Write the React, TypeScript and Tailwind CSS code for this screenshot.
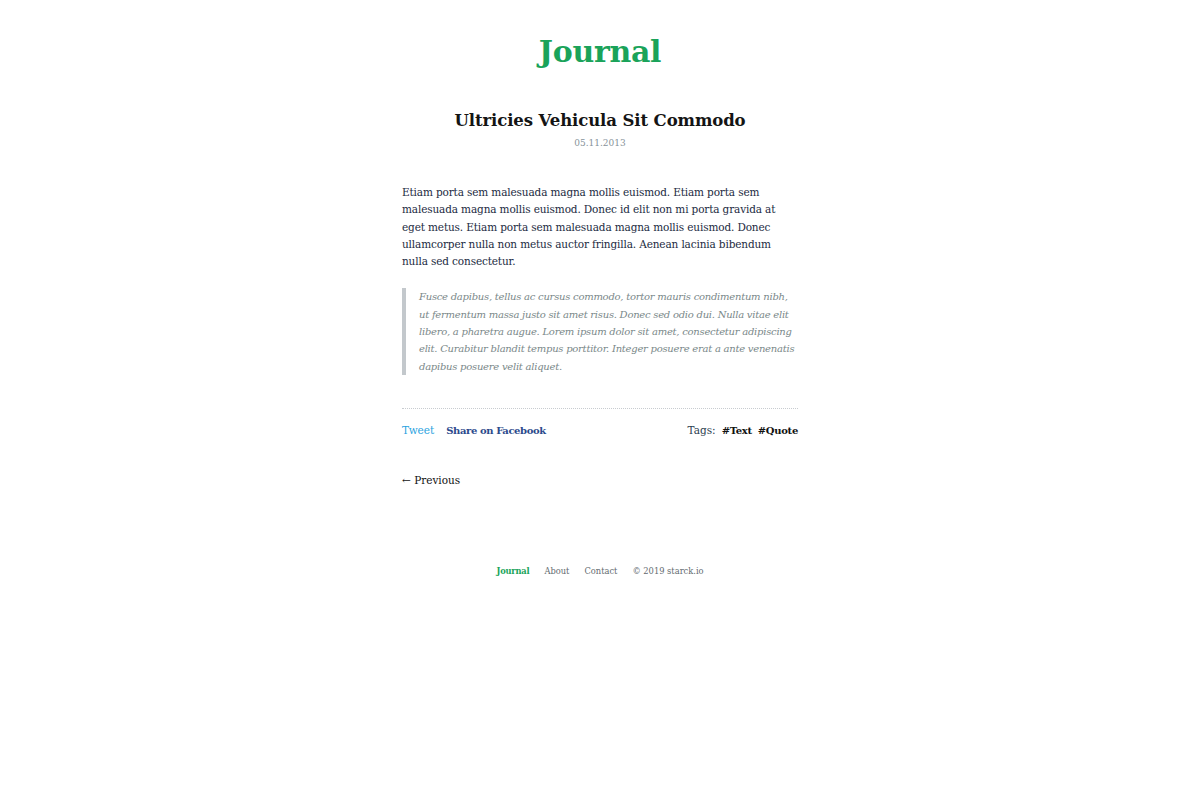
export default function App() {
  return (
    <div
      className="min-h-[800px] bg-white text-[#1c2b42]"
      style={{ fontFamily: '"DejaVu Serif", "Liberation Serif", serif' }}
    >
      <div className="mx-auto w-[396px] pt-[30px]">
        <h1 className="text-center text-[30px] leading-[43px] font-bold tracking-[-0.3px] text-[#1aa35a]">
          Journal
        </h1>

        <div className="mt-[34px] text-center">
          <h2 className="text-[16.5px] leading-[28px] font-bold tracking-[-0.1px] text-[#141414]">
            Ultricies Vehicula Sit Commodo
          </h2>
          <div className="text-[9px] leading-[16px] text-[#87939a]">05.11.2013</div>
        </div>

        <p className="mt-[33px] text-[10.5px] leading-[17.3px] tracking-[-0.14px]">
          Etiam porta sem malesuada magna mollis euismod. Etiam porta sem malesuada magna
          mollis euismod. Donec id elit non mi porta gravida at eget metus. Etiam porta sem
          malesuada magna mollis euismod. Donec ullamcorper nulla non metus auctor fringilla.
          Aenean lacinia bibendum nulla sed consectetur.
        </p>

        <blockquote className="mt-[18px] border-l-4 border-[#c3c8cc] pl-[13px] text-[10px] leading-[17.3px] tracking-[-0.25px] italic text-[#7a8889]">
          Fusce dapibus, tellus ac cursus commodo, tortor mauris condimentum nibh, ut
          fermentum massa justo sit amet risus. Donec sed odio dui. Nulla vitae elit libero,
          a pharetra augue. Lorem ipsum dolor sit amet, consectetur adipiscing elit.
          Curabitur blandit tempus porttitor. Integer posuere erat a ante venenatis dapibus
          posuere velit aliquet.
        </blockquote>

        <div className="mt-[33px] border-t border-dotted border-[#c8ccd0]" />

        <div className="mt-[13px] flex items-center justify-between text-[10.5px] leading-[17px]">
          <div className="flex gap-3">
            <a href="#" className="text-[#2aa3e0]">Tweet</a>
            <a href="#" className="text-[10px] font-bold tracking-[-0.4px] text-[#2c4a8c]">
              Share on Facebook
            </a>
          </div>
          <div className="flex items-center gap-[6px]">
            <span className="text-[#2d3e50]">Tags:</span>
            <a href="#" className="text-[10px] font-bold tracking-[-0.3px] text-[#111]">#Text</a>
            <a href="#" className="text-[10px] font-bold tracking-[-0.3px] text-[#111]">#Quote</a>
          </div>
        </div>

        <div className="mt-[33px] text-[10.5px] leading-[17px]">
          <a href="#" className="text-[#111]">← Previous</a>
        </div>

        <div className="mt-[75px] flex justify-center gap-[15px] text-[8.3px] leading-[15px] text-[#636b70]">
          <a href="#" className="font-bold tracking-[-0.2px] text-[#1aa35a]">Journal</a>
          <a href="#">About</a>
          <a href="#">Contact</a>
          <span>© 2019 starck.io</span>
        </div>
      </div>
    </div>
  );
}
